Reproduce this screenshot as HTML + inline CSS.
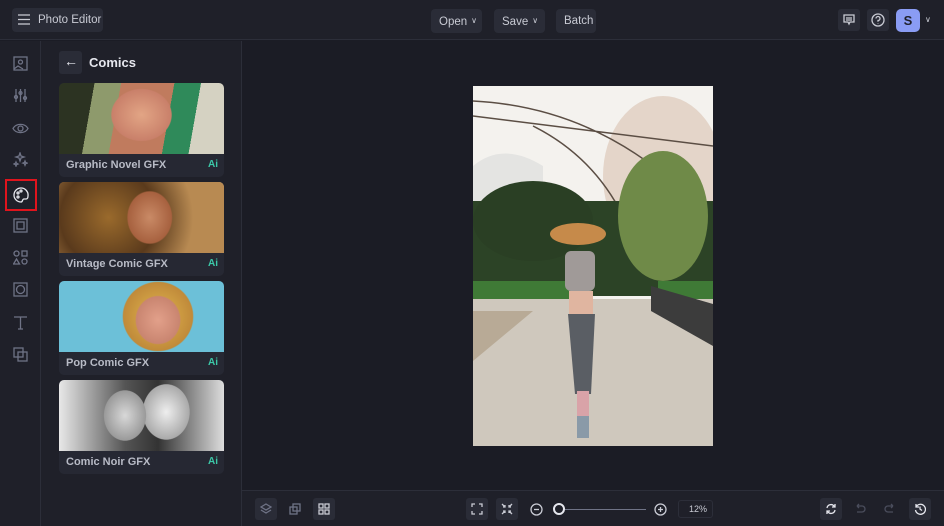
<!DOCTYPE html>
<html><head><style>
*{box-sizing:border-box;margin:0;padding:0}
body{width:944px;height:526px;background:#1b1c25;font-family:"Liberation Sans",sans-serif;position:relative;overflow:hidden;color:#d6d8e0}
.top{position:absolute;left:0;top:0;width:944px;height:40px;background:#1f2029;border-bottom:1px solid #2c2e39}
.btn{position:absolute;background:#2a2c37;border-radius:4px;height:24px;font-size:11.5px;line-height:24px;color:#c9cbd4;padding:0 8px;white-space:nowrap;overflow:hidden}
.rail{position:absolute;left:0;top:41px;width:41px;height:485px;background:#1f2029;border-right:1px solid #2c2e39}
.panel{position:absolute;left:41px;top:41px;width:201px;height:485px;background:#1f2029;border-right:1px solid #2c2e39}
.card{position:absolute;left:18px;width:165px;height:94px;background:#262833;border-radius:5px;overflow:hidden}
.card .img{height:71px}
.card .lb{font-size:11px;font-weight:bold;color:#b8bbc6;padding:5px 7px;position:relative}
.card .lb b{position:absolute;right:6px;top:5px;color:#3cc8a8;font-size:10px}
.bot{position:absolute;left:242px;top:490px;width:702px;height:36px;background:#1f2029;border-top:1px solid #2c2e39}
.ib{position:absolute;width:22px;height:22px;border-radius:3px;background:#2a2c37}
svg.i{position:absolute;stroke:#6f7386;fill:none;stroke-width:1.3}
.ch{font-size:8px;margin-left:4px;vertical-align:2px}
</style></head><body>
<div class="top">
 <div class="btn" style="left:12px;top:8px;width:91px;padding-left:26px">Photo Editor</div>
 <svg class="i" style="left:18px;top:14px;stroke:#c9cbd4" width="12" height="11"><path d="M0 1h12M0 5.5h12M0 10h12"/></svg>
 <div class="btn" style="left:431px;top:9px;width:51px">Open<span class="ch">∨</span></div>
 <div class="btn" style="left:494px;top:9px;width:51px">Save<span class="ch">∨</span></div>
 <div class="btn" style="left:556px;top:9px;width:40px">Batch</div>
 <div class="ib" style="left:838px;top:9px"></div>
 <svg class="i" style="left:843px;top:14px;stroke:#c9cbd4" width="12" height="12"><path d="M1 1h10v7H7l-1 2-1-2H1z M3 4h6M3 6h6"/></svg>
 <div class="ib" style="left:867px;top:9px"></div>
 <svg class="i" style="left:871px;top:13px;stroke:#c9cbd4" width="14" height="14"><circle cx="7" cy="7" r="6"/><path d="M5 5.5a2 2 0 1 1 2 2v1.2M7 10.5v.5"/></svg>
 <div style="position:absolute;left:896px;top:9px;width:24px;height:23px;border-radius:5px;background:#8a9cf4;color:#1f2029;font-weight:bold;font-size:13px;text-align:center;line-height:23px">S</div>
 <div style="position:absolute;left:925px;top:15px;font-size:8px;color:#c9cbd4">∨</div>
</div>
<div class="rail">
 <svg class="i" style="left:13px;top:15px" width="15" height="15"><rect x="1" y="1" width="13" height="13"/><circle cx="7.5" cy="6" r="2"/><path d="M1 13l4-3 5 3"/></svg>
 <svg class="i" style="left:13px;top:47px" width="15" height="15"><path d="M3 1v13M7.5 1v13M12 1v13"/><circle cx="3" cy="9" r="1.5"/><circle cx="7.5" cy="5" r="1.5"/><circle cx="12" cy="10" r="1.5"/></svg>
 <svg class="i" style="left:12px;top:80px" width="17" height="15"><path d="M1 7.5C4 2 13 2 16 7.5 13 13 4 13 1 7.5z"/><circle cx="8.5" cy="7.5" r="2.5"/></svg>
 <svg class="i" style="left:13px;top:111px" width="15" height="15"><path d="M7 1l1 3 3 1-3 1-1 3-1-3-3-1 3-1zM12 9l.6 1.5 1.5.6-1.5.6-.6 1.5-.6-1.5-1.5-.6 1.5-.6zM3 10l.5 1.2L5 12l-1.5.6L3 14l-.5-1.4L1 12l1.5-.8z"/></svg>
 <div style="position:absolute;left:5px;top:138px;width:32px;height:32px;border:2px solid #e0141d"></div>
 <svg class="i" style="left:13px;top:146px;stroke:#e6e7ee" width="16" height="16"><path d="M8 1a7 7 0 1 0 0 14c2 0 1-3 3-3h2c1.5 0 2-1 2-3A7 7 0 0 0 8 1z"/><circle cx="5" cy="6" r="1"/><circle cx="8" cy="4" r="1"/><circle cx="5" cy="10" r="1"/></svg>
 <svg class="i" style="left:13px;top:177px" width="15" height="15"><rect x="1" y="1" width="13" height="13"/><rect x="4" y="4" width="7" height="7"/></svg>
 <svg class="i" style="left:13px;top:209px" width="15" height="15"><circle cx="3.5" cy="3.5" r="2.5"/><rect x="9" y="1" width="5" height="5"/><path d="M3.5 9l3 5h-6z"/><circle cx="11.5" cy="11.5" r="2.5"/></svg>
 <svg class="i" style="left:13px;top:241px" width="15" height="15"><rect x="1" y="1" width="13" height="13"/><circle cx="7.5" cy="7.5" r="4"/></svg>
 <svg class="i" style="left:13px;top:274px" width="15" height="15"><path d="M1 2h13M7.5 2v12M5 14h5"/></svg>
 <svg class="i" style="left:13px;top:306px" width="15" height="15"><rect x="1" y="1" width="9" height="9"/><rect x="5" y="5" width="9" height="9"/></svg>
</div>
<div class="panel">
 <div class="ib" style="left:18px;top:10px;width:23px;height:23px"></div>
 <div style="position:absolute;left:23px;top:12px;font-size:14px;color:#e6e7ee">←</div>
 <div style="position:absolute;left:48px;top:14px;font-size:13px;font-weight:bold;color:#e6e7ee">Comics</div>
 <div class="card" style="top:42px"><div class="img" style="background:radial-gradient(ellipse 30% 60% at 50% 45%,#e2a585,#c9806a 60%,transparent 62%),linear-gradient(100deg,#2c3322 0 20%,#8e9a6c 20% 35%,#c07b5e 35% 65%,#2f8a5a 65% 80%,#d5d2c2 80%)"></div><div class="lb">Graphic Novel GFX<b>Ai</b></div></div>
 <div class="card" style="top:141px"><div class="img" style="background:radial-gradient(ellipse 22% 60% at 55% 50%,#c98a66,#a7613f 60%,transparent 63%),radial-gradient(circle at 30% 50%,#9a6a2c,#5a3a1c 40%,#b88a52 70%),linear-gradient(90deg,#8a5a2a,#d4b48a)"></div><div class="lb">Vintage Comic GFX<b>Ai</b></div></div>
 <div class="card" style="top:240px"><div class="img" style="background:radial-gradient(ellipse 22% 55% at 60% 55%,#e2a08a,#c98570 60%,transparent 63%),radial-gradient(ellipse 35% 80% at 60% 50%,#e2b74e,#c08a3a 60%,transparent 62%),#6cc0d8"></div><div class="lb">Pop Comic GFX<b>Ai</b></div></div>
 <div class="card" style="top:339px"><div class="img" style="background:radial-gradient(ellipse 18% 50% at 40% 50%,#d8d8d8,#9a9a9a 70%,transparent 72%),radial-gradient(ellipse 20% 55% at 65% 45%,#eee,#aaa 70%,transparent 72%),linear-gradient(90deg,#e8e8e8,#555 40%,#333 60%,#ddd)"></div><div class="lb">Comic Noir GFX<b>Ai</b></div></div>
</div>
<svg style="position:absolute;left:473px;top:86px" width="240" height="360">
 <rect width="240" height="360" fill="#f4f2ee"/>
 <ellipse cx="190" cy="90" rx="60" ry="80" fill="#d8c2b0" opacity=".6"/>
 <path d="M0 30Q80 40 240 60M0 15Q100 20 180 80M60 40Q120 70 150 130" stroke="#5b4e44" stroke-width="1.5" fill="none"/>
 <path d="M0 80q30-25 70 0v40H0z" fill="#e4e4e2"/>
 <path d="M0 115h240v95H0z" fill="#2c4326"/>
 <ellipse cx="60" cy="135" rx="60" ry="40" fill="#2a3f24"/>
 <ellipse cx="190" cy="130" rx="45" ry="65" fill="#6f8a48"/>
 <rect x="0" y="195" width="100" height="20" fill="#3f7a36"/>
 <rect x="185" y="195" width="55" height="30" fill="#3f7a36"/>
 <path d="M0 213h240v147H0z" fill="#cfc8bd"/>
 <path d="M0 225l60 0-60 50z" fill="#b8aa96"/>
 <path d="M178 200l62 18v42l-62-35z" fill="#3c3c3c"/>
 <ellipse cx="105" cy="148" rx="28" ry="11" fill="#c68a4a"/>
 <rect x="92" y="165" width="30" height="40" rx="6" fill="#a09a98"/>
 <rect x="96" y="205" width="24" height="25" fill="#e0b5a0"/>
 <path d="M95 228h27l-4 80h-16z" fill="#5a5e64"/>
 <rect x="104" y="305" width="12" height="45" fill="#d9a3a8"/>
 <rect x="104" y="330" width="12" height="22" fill="#8a9aa8"/>
</svg>
<div class="bot">
 <div class="ib" style="left:13px;top:7px"></div>
 <svg class="i" style="left:18px;top:12px" width="12" height="12"><path d="M6 1l5 3-5 3-5-3zM1 7l5 3 5-3"/></svg>
 <svg class="i" style="left:47px;top:12px" width="12" height="12"><rect x="1" y="4" width="7" height="7"/><rect x="4" y="1" width="7" height="7"/></svg>
 <div class="ib" style="left:71px;top:7px"></div>
 <svg class="i" style="left:76px;top:12px;stroke:#c9cbd4" width="12" height="12"><rect x="1" y="1" width="4" height="4"/><rect x="7" y="1" width="4" height="4"/><rect x="1" y="7" width="4" height="4"/><rect x="7" y="7" width="4" height="4"/></svg>
 <div class="ib" style="left:224px;top:7px"></div>
 <svg class="i" style="left:229px;top:12px;stroke:#c9cbd4" width="12" height="12"><path d="M1 4V1h3M8 1h3v3M11 8v3H8M4 11H1V8"/></svg>
 <div class="ib" style="left:254px;top:7px"></div>
 <svg class="i" style="left:259px;top:12px;stroke:#c9cbd4" width="12" height="12"><path d="M1 1l3 3M4 2v2H2M11 1L8 4M8 2v2h2M1 11l3-3M2 8h2v2M11 11L8 8M10 8H8v2"/></svg>
 <svg class="i" style="left:288px;top:12px;stroke:#c9cbd4" width="13" height="13"><circle cx="6.5" cy="6.5" r="5.5"/><path d="M4 6.5h5"/></svg>
 <div style="position:absolute;left:322px;top:18px;width:82px;height:1px;background:#6f7386"></div>
 <div style="position:absolute;left:311px;top:12px;width:12px;height:12px;border-radius:50%;border:2px solid #e6e7ee;background:#1f2029"></div>
 <svg class="i" style="left:412px;top:12px;stroke:#c9cbd4" width="13" height="13"><circle cx="6.5" cy="6.5" r="5.5"/><path d="M4 6.5h5M6.5 4v5"/></svg>
 <div style="position:absolute;left:436px;top:9px;width:35px;height:18px;border:1px solid #2c2e39;border-radius:3px;font-size:9px;line-height:16px;text-align:right;padding-right:5px;color:#c9cbd4">12%</div>
 <div class="ib" style="left:578px;top:7px"></div>
 <svg class="i" style="left:583px;top:12px;stroke:#e6e7ee" width="12" height="12"><path d="M2 5a4 4 0 0 1 7-2l1 1M10 7a4 4 0 0 1-7 2L2 8M10 1v3H7M2 11V8h3"/></svg>
 <svg class="i" style="left:612px;top:12px;stroke:#4a4d5c" width="12" height="12"><path d="M3 3h5a3 3 0 0 1 0 6H3M3 3l2-2M3 3l2 2"/></svg>
 <svg class="i" style="left:642px;top:12px;stroke:#4a4d5c" width="12" height="12"><path d="M9 3H4a3 3 0 0 0 0 6h5M9 3L7 1M9 3L7 5"/></svg>
 <div class="ib" style="left:667px;top:7px"></div>
 <svg class="i" style="left:672px;top:12px;stroke:#e6e7ee" width="12" height="12"><path d="M2 4a5 5 0 1 1-.5 3M2 1v3h3M6 3.5V6l2 1.5"/></svg>
</div>
</body></html>
